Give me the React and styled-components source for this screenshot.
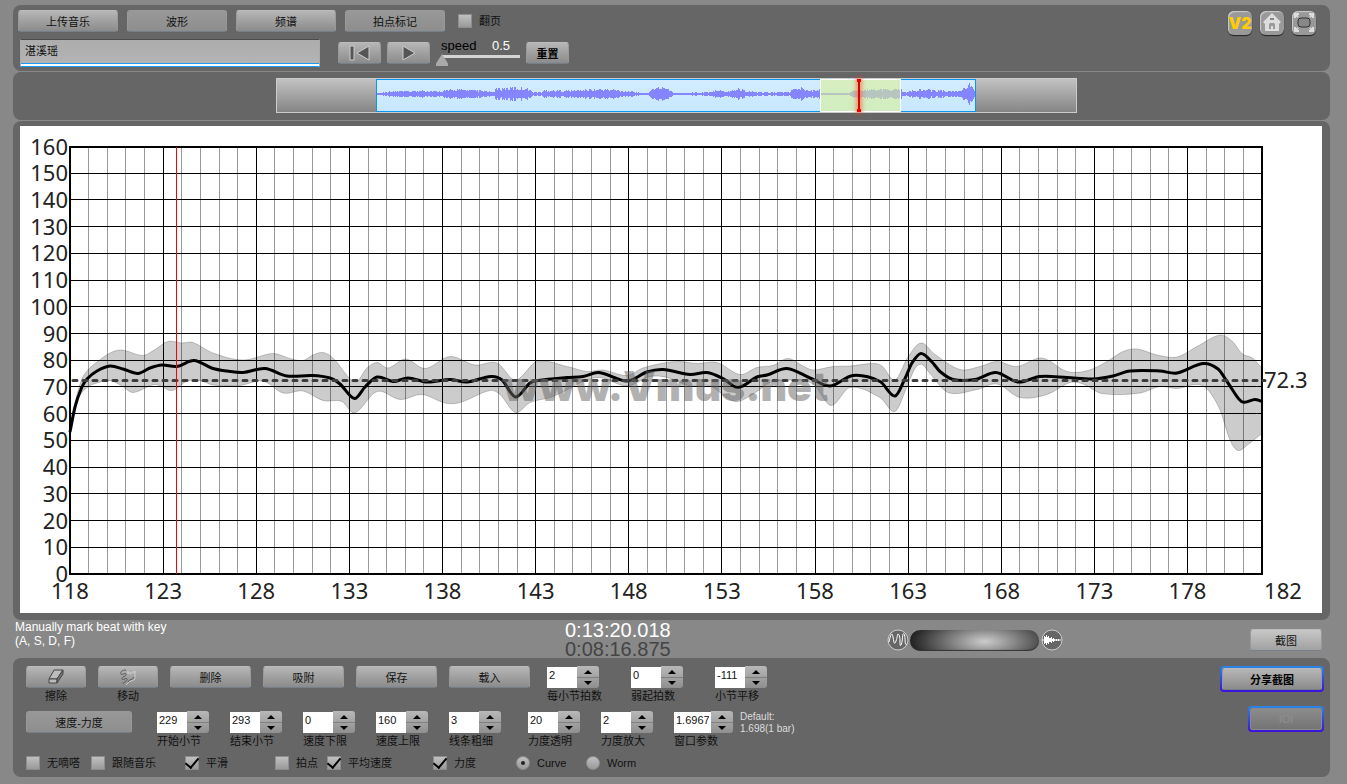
import React, { useState } from "react"
import styled, { createGlobalStyle } from "styled-components"

const GlobalStyle = createGlobalStyle`
    * {
        box-sizing: border-box;
    }

    body {
        margin: 0;

        background: #888;

        font-family: "Liberation Sans", "Noto Sans CJK SC", sans-serif;
        font-size: 11px;
    }

    button, input {
        font-family: inherit;
        font-size: inherit;
    }
`

const StyledPage = styled.main`
    padding: 5px 17px 7px 13px;

    display: flex;
    flex-direction: column;
`

const StyledPanel = styled.section`
    border-radius: 8px;

    background: #666;
`

const StyledHeader = styled(StyledPanel)`
    height: 66px;
    margin-bottom: 1px;
    padding: 5px 14px 0 5px;

    display: flex;
    justify-content: space-between;
`

const StyledToolbar = styled.div`
    display: flex;
    align-items: center;
    gap: 9px;
`

const StyledTransport = styled.div`
    margin: 7px 0 0 2px;

    display: flex;
    align-items: center;
    gap: 6px;
`

const StyledButton = styled.button`
    width: ${props => props.$width || 100}px;
    height: 22px;
    padding: 0;

    display: flex;
    flex-shrink: 0;
    align-items: center;
    justify-content: center;

    border: 1px solid #999;
    border-top-color: #bbb;
    border-bottom-color: #76808a;
    border-radius: 3px;

    background: linear-gradient(180deg, #b6b6b6, #8b8b8b);
    color: #111;

    ${props => props.$bold && `
        color: #000;
        font-weight: 700;
    `}

    ${props => props.$active && `
        border-top-color: #999;

        background: linear-gradient(180deg, #989898, #8e8e8e);
    `}

    ${props => props.$light && `
        background: linear-gradient(180deg, #c8c8c8, #a0a0a0);
    `}

    &:disabled {
        border-color: #8a8a8a;

        background: linear-gradient(180deg, #8c8c8c, #747474);
        color: #8f8f8f;
    }
`

const StyledFrame = styled.div`
    padding: 2px;

    border-radius: 4px;

    background:
        linear-gradient(#777, #777) content-box,
        linear-gradient(180deg, #2b86e8, #3a10d8);
`

const StyledField = styled.input`
    width: 300px;
    height: 28px;
    margin-right: 12px;
    padding: 0 4px 6px;

    border: 1px solid #aaa;
    border-top-color: #4c4c4c;
    border-bottom-color: #1a9bf5;
    outline: 0;
    box-shadow: inset 0 -2px #fff, inset 0 -3px #1a9bf5;

    background: linear-gradient(180deg, #adadad, #b4b4b4);
    color: #111;
`

const StyledSpeed = styled.label`
    width: 84px;
    height: 28px;

    display: flex;
    flex-wrap: wrap;
    justify-content: space-between;

    line-height: 14px;
`

const StyledSpeedName = styled.span`
    padding-left: 5px;

    color: #000;
    font-size: 13px;
`

const StyledSpeedValue = styled.span`
    padding-right: 10px;

    color: #fff;
    font-size: 13px;
`

const StyledSlider = styled.input`
    width: 100%;
    height: 13px;
    margin: 0;

    appearance: none;
    background: linear-gradient(#d4d4d4, #d4d4d4) 6px 1px / 100% 3px no-repeat;

    &::-webkit-slider-thumb {
        width: 12px;
        height: 12px;

        appearance: none;
        background: #aaa;
        clip-path: polygon(50% 0, 100% 80%, 100% 100%, 0 100%, 0 80%);
    }
`

const StyledLabel = styled.label`
    display: flex;
    align-items: center;
    gap: 7px;

    color: #111;
    line-height: 14px;
    white-space: nowrap;
`

const StyledTick = styled.input`
    width: 14px;
    height: 14px;
    margin: 0;

    display: grid;
    place-content: center;

    appearance: none;
    border: 1px solid #8d8d8d;
    background: linear-gradient(180deg, #c0c0c0, #999);

    &[type="radio"] {
        border-radius: 50%;
    }

    &[type="checkbox"]:checked::before {
        width: 6px;
        height: 11px;
        margin-bottom: 3px;

        border: solid #000;
        border-width: 0 2px 2px 0;

        content: "";
        transform: rotate(40deg);
    }

    &[type="radio"]:checked::before {
        width: 4px;
        height: 4px;

        border-radius: 50%;

        background: #222;
        content: "";
    }
`

const StyledShortcuts = styled.nav`
    padding-top: 1px;

    display: flex;
    align-items: flex-start;
    gap: 8px;
`

const StyledShortcut = styled.a`
    width: 24px;
    height: 24px;

    display: flex;
    align-items: center;
    justify-content: center;

    border-radius: 6px;
    box-shadow: inset 1px 1px 1px #ccc, 0 1px 1px #222;

    background: #999;
    color: #fc0;
    font-family: Inter, sans-serif;
    font-size: 16px;
    font-weight: 900;
    text-decoration: none;
`

const StyledOverview = styled(StyledPanel)`
    height: 48px;
    margin-bottom: 1px;
    padding: 6px 0 0 10px;

    display: flex;
    align-items: flex-start;
    justify-content: center;
`

const StyledTrack = styled.div`
    width: 801px;
    height: 35px;
    padding: 0 100px 0 99px;

    border: 1px solid #ccc;

    background: linear-gradient(180deg, #c2c2c2, #858585);
`

const StyledClip = styled.div`
    height: 33px;

    position: relative;

    border: 1px solid #0b95f0;

    background: linear-gradient(180deg, #d4ecff, #c6e8ff);

    svg {
        width: 100%;
        height: 31px;

        display: block;
    }
`

const StyledSelection = styled.div`
    position: absolute;
    top: -1px;
    bottom: -1px;
    left: 74%;
    width: 81px;

    border: 1px solid #fff;

    background: rgba(216,240,150,.6);
`

const StyledPlayhead = styled.div`
    position: absolute;
    top: -1px;
    bottom: -1px;
    left: 37px;
    width: 2px;

    box-shadow: 0 0 4px 2px rgba(255,60,30,.5);

    background: #d00;

    &::before, &::after {
        width: 4px;
        height: 3px;

        position: absolute;
        left: -1px;

        background: #e00;
        content: "";
    }

    &::after {
        bottom: 0;
    }
`

const StyledChart = styled(StyledPanel)`
    padding: 5px 8px 7px 7px;
`

const StyledPlot = styled.svg`
    width: 100%;
    height: auto;

    display: block;

    background: #fff;

    text {
        fill: #222;
        font-family: "Noto Sans", sans-serif;
        font-size: 22px;
    }

    .watermark {
        fill: rgba(100,100,100,.5);
        font-family: Inter, sans-serif;
        font-size: 41px;
        font-weight: 900;
    }
`

const StyledStatus = styled.div`
    height: 38px;
    padding: 0 8px 0 2px;

    display: grid;
    grid-template-columns: 550fr 322fr 363fr 72px;
    align-items: center;
`

const StyledHint = styled.p`
    margin: 0;
    padding-bottom: 12px;

    color: #fff;
    font-size: 12px;
    line-height: 14px;
`

const StyledClock = styled.div`
    color: #fff;
    font-size: 20px;
    line-height: 19px;
`

const StyledTotal = styled.div`
    color: #444;
`

const StyledZoom = styled.label`
    display: flex;
    align-items: center;
    gap: 1px;
`

const StyledWheel = styled.input`
    width: 129px;
    height: 21px;
    margin: 0;

    appearance: none;
    border-radius: 11px;
    box-shadow: inset 0 -1px 1px #333;

    background: radial-gradient(ellipse 78px 30px at 58% 55%, #ccc, #a0a0a0 25%, #222 95%);

    &::-webkit-slider-thumb {
        width: 1px;
        height: 1px;

        appearance: none;
    }
`

const StyledControls = styled(StyledPanel)`
    padding: 8px 6px 7px 13px;

    display: flex;
    justify-content: space-between;
`

const StyledRows = styled.div`
    display: flex;
    flex-direction: column;
    gap: 8px;
`

const StyledRow = styled.div`
    height: 37px;

    display: flex;
    align-items: flex-start;
    gap: 12px;
`

const StyledGroup = styled.div`
    margin-left: ${props => props.$indent}px;

    display: flex;
    gap: ${props => props.$gap}px;
`

const StyledOptions = styled.div`
    display: grid;
    grid-template-columns: 65px 94px 90px 52px 106px 83px 70px auto;
`

const StyledTool = styled.div`
    display: flex;
    flex-direction: column;
    align-items: center;

    color: #111;
    line-height: 16px;
`

const StyledSpinner = styled.div`
    width: ${props => props.$width + 22}px;

    display: grid;
    grid-template-columns: 1fr 22px;
    grid-template-rows: 22px 16px;

    input {
        width: 100%;
        margin: 1px 0 0;
        padding: 0 2px 6px;

        border: 0;

        background: #fff;
        color: #111;
    }

    label {
        grid-column: 1 / 3;

        color: #111;
        line-height: 16px;
        white-space: nowrap;
    }
`

const StyledSteps = styled.div`
    display: flex;
    flex-direction: column;

    border-radius: 0 3px 3px 0;

    background: linear-gradient(180deg, #b8b8b8, #8f8f8f);
`

const StyledStep = styled.button`
    height: 11px;
    padding: 0;

    display: flex;
    align-items: center;
    justify-content: center;

    border: 0;

    background: none;

    & + & {
        border-top: 1px solid #808080;
    }
`

const StyledDefault = styled.p`
    margin: 0 0 0 -5px;

    color: #ddd;
    font-size: 10px;
    line-height: 12px;
`

const StyledShare = styled.div`
    display: flex;
    flex-direction: column;
    align-items: flex-end;
    gap: 14px;
`

const LEVELS = [
    [0, 1], [14, 3], [36, 3], [46, 4], [60, 3], [78, 5], [100, 4], [116, 2], [118, 6], [136, 7],
    [152, 6], [155, 2], [165, 2], [167, 4], [195, 4], [214, 5], [236, 5], [250, 3], [270, 1],
    [275, 6], [288, 8], [294, 4], [296, 1], [334, 2], [338, 5], [350, 3], [362, 6], [370, 3],
    [385, 2], [412, 2], [415, 5], [426, 7], [434, 4], [442, 5], [444, 1], [470, 1], [476, 4],
    [490, 5], [524, 5], [526, 2], [545, 5], [560, 4], [580, 3], [588, 7], [592, 12], [596, 5], [598, 2],
]

const TEMPO = [
    [70, 432], [75, 407], [81.5, 388], [87, 379], [97, 371], [110, 366], [123, 369], [138, 373.5],
    [150, 368], [162, 365], [177, 366.5], [194, 360.5], [213, 368.5], [227, 371], [243, 372.5],
    [265, 368.5], [287, 376], [312, 375.5], [330, 378], [340, 384], [354.5, 398.5], [365, 387],
    [377, 377], [393, 381.5], [408, 378], [427, 382], [450, 379.5], [467, 382], [491, 376.5],
    [502, 380], [515.5, 397], [530, 383], [538, 380.5], [567, 377.5], [583, 376.5], [599, 372.5],
    [627, 381], [647, 372], [663, 369.5], [690, 374.5], [707, 372.5], [723, 378.5], [738, 387.5],
    [757, 377], [767, 375], [787, 368.5], [810, 378], [830, 386], [853, 375.5], [880, 381.5],
    [895, 396], [905, 378.5], [912, 363], [921, 353.5], [932, 362], [940, 371.5], [953, 379.5],
    [975, 379.5], [996, 372.5], [1018, 382], [1040, 376.5], [1067, 377.5], [1093, 379],
    [1113, 376], [1130, 371], [1160, 371], [1177, 373], [1203, 363.5], [1218, 369], [1228, 383],
    [1241.5, 401.5], [1255, 399.5], [1262, 401.5],
]

const UPPER = [
    [70, 430], [75, 403], [81.5, 380], [88, 370], [97, 362], [110, 353], [122, 350], [143, 355.5],
    [155, 349.5], [168, 341.5], [182, 343], [193, 342.5], [213, 353], [243, 360], [273, 353.5],
    [290, 358.5], [303, 360.5], [313, 355], [323, 352.5], [333, 358], [355, 382], [367, 368],
    [377, 362.5], [388, 368], [405.5, 359], [425, 368.5], [450, 356.5], [475, 365], [497, 363],
    [515.5, 380], [537, 361.5], [567, 366.5], [587, 371.5], [603, 370], [627, 375.5], [643, 368],
    [667, 362.5], [680, 361.5], [697, 363.5], [717, 362.5], [740, 374.5], [757, 367.5],
    [773, 365.5], [788, 358.5], [803, 366], [813, 370], [833, 366.5], [850, 366], [873, 363.5],
    [882, 366], [895, 380], [908, 357], [921, 343], [935, 354.5], [960, 369.5], [980, 366.5],
    [997, 361.5], [1017, 366.5], [1042, 358], [1067, 371.5], [1088, 370.5], [1107, 361.5],
    [1123, 351.5], [1137, 349], [1157, 355], [1177, 357], [1197, 346.5], [1220, 335],
    [1232, 341], [1242, 353.5], [1253, 358.5], [1262, 368.5],
]

const LOWER = [
    [70, 433], [78, 400], [87, 387.5], [97, 383], [110, 380.5], [122, 386], [133, 392.5],
    [155, 384.5], [172, 390.5], [187, 381], [200, 380.5], [213, 385], [240, 385.5], [263, 381],
    [283, 393], [303, 391], [323, 400.5], [342, 401.5], [354.5, 413], [377, 391.5], [400, 399.5],
    [422, 394.5], [445, 403], [460, 402.5], [490, 390.5], [500, 394.5], [515.5, 412.5],
    [530, 402.5], [550, 397.5], [567, 390], [583, 381.5], [600, 377.5], [627, 386], [650, 376.5],
    [667, 377.5], [690, 386], [710, 386], [735, 401.5], [757, 391.5], [770, 382.5], [790, 380],
    [813, 384], [831, 405.5], [850, 387.5], [880, 397.5], [895, 411.5], [907, 386.5],
    [915, 368.5], [922, 364.5], [930, 373.5], [948, 392.5], [977, 389.5], [997, 384],
    [1020, 397.5], [1047, 394.5], [1070, 382.5], [1083, 384], [1102, 393.5], [1140, 393],
    [1160, 386.5], [1177, 388.5], [1197, 384.5], [1208, 390], [1220, 410], [1230, 440],
    [1238, 450.5], [1248, 444.5], [1262, 433.5],
]

const PLOT = { left: 70, right: 1262, top: 146.5, bottom: 574 }

const barX = bar => PLOT.left + (bar - 118) * (PLOT.right - PLOT.left) / 64
const tempoY = tempo => PLOT.bottom - tempo * (PLOT.bottom - PLOT.top) / 160

const range = (from, to, step) => {
    const values = []
    for(let value = from; value <= to; value += step) values.push(value)
    return values
}

// every segment leaves and enters its points at the slope between their neighbours
const smooth = points => points.slice(1).map((point, index) => {
    const slope = i => {
        const before = points[Math.max(i - 1, 0)]
        const after = points[Math.min(i + 1, points.length - 1)]
        return (after[1] - before[1]) / (after[0] - before[0])
    }
    const [x0, y0] = points[index]
    const third = (point[0] - x0) / 3

    return `C${x0 + third} ${y0 + slope(index) * third} ` +
        `${point[0] - third} ${point[1] - slope(index + 1) * third} ${point[0]} ${point[1]}`
}).join("")

const wavePath = () => {
    let path = ""
    for(let x = 0; x < 598; x++){
        const next = LEVELS.findIndex(level => level[0] > x)
        const [x0, a0] = LEVELS[next - 1]
        const [x1, a1] = LEVELS[next]
        const level = a0 + (a1 - a0) * (x - x0) / (x1 - x0)
        const noise = Math.abs(Math.sin(x * 12.9898) * 43758.5453) % 1
        const height = Math.max(1, Math.round(level * (.55 + noise * .5)))
        path += `M${x + .5} ${14 - height}V${14 + height}`
    }
    return path
}

const Check = ({ label, checked }) => (
    <StyledLabel>
        <StyledTick type="checkbox" defaultChecked={checked} />
        {label}
    </StyledLabel>
)

const Spinner = ({ id, label, value, step = 1, width = 30 }) => {
    const [current, setCurrent] = useState(value)
    const move = amount => setCurrent(String(Number(current) + amount))

    return (
        <StyledSpinner $width={width}>
            <input id={id} value={current} onChange={event => setCurrent(event.target.value)} />
            <StyledSteps>
                <StyledStep aria-label={`${label} +`} onClick={() => move(step)}>
                    <svg width="8" height="4"><path d="M0 4L4 0L8 4Z" /></svg>
                </StyledStep>
                <StyledStep aria-label={`${label} -`} onClick={() => move(-step)}>
                    <svg width="8" height="4"><path d="M0 0L4 4L8 0Z" /></svg>
                </StyledStep>
            </StyledSteps>
            <label htmlFor={id}>{label}</label>
        </StyledSpinner>
    )
}

const Overview = () => (
    <StyledOverview>
        <StyledTrack>
            <StyledClip>
                <svg viewBox="0 0 598 31" preserveAspectRatio="none">
                    <path d={wavePath()} stroke="#8585ff" />
                </svg>
                <StyledSelection>
                    <StyledPlayhead />
                </StyledSelection>
            </StyledClip>
        </StyledTrack>
    </StyledOverview>
)

const Chart = () => (
    <StyledChart>
        <StyledPlot viewBox="20 126 1302 487">
            <g stroke="#999" shapeRendering="crispEdges">
                {range(119, 181, 1).filter(bar => bar % 5 !== 3).map(bar => (
                    <line key={bar} x1={barX(bar)} x2={barX(bar)} y1={PLOT.top} y2={PLOT.bottom} />
                ))}
            </g>
            <g stroke="#000" shapeRendering="crispEdges">
                {range(123, 178, 5).map(bar => (
                    <line key={bar} x1={barX(bar)} x2={barX(bar)} y1={PLOT.top} y2={PLOT.bottom} />
                ))}
                {range(10, 150, 10).map(tempo => (
                    <line key={tempo} x1={PLOT.left} x2={PLOT.right} y1={tempoY(tempo)} y2={tempoY(tempo)} />
                ))}
            </g>
            <path
                d={`M70 430${smooth(UPPER)}L1262 433.5${smooth([...LOWER].reverse())}Z`}
                fill="rgba(0,0,0,.2)"
                stroke="rgba(0,0,0,.2)"
            />
            <rect x="70" y="147" width="1192" height="427" fill="none" stroke="#000" strokeWidth="2" />
            <path d={`M70 432${smooth(TEMPO)}`} fill="none" stroke="#000" strokeWidth="3" />
            <line
                x1="73"
                x2="1265"
                y1="380.5"
                y2="380.5"
                stroke="#3c3c3c"
                strokeWidth="3"
                strokeDasharray="4 6"
                strokeLinecap="round"
            />
            <line x1="176.5" x2="176.5" y1="147" y2="574" stroke="#f00" />
            {range(0, 160, 10).map(tempo => (
                <text key={tempo} x="68" y={tempoY(tempo) + 8} textAnchor="end">{tempo}</text>
            ))}
            {range(118, 178, 5).map(bar => (
                <text key={bar} x={barX(bar)} y="599" textAnchor="middle">{bar}</text>
            ))}
            <text x="1283" y="599" textAnchor="middle">182</text>
            <text x="1264" y="388">72.3</text>
            <text className="watermark" x="503" y="401">www.Vmus.net</text>
        </StyledPlot>
    </StyledChart>
)

const App = () => (
    <>
        <GlobalStyle />
        <StyledPage>
            <StyledHeader as="header">
                <div>
                    <StyledToolbar>
                        <StyledButton>上传音乐</StyledButton>
                        <StyledButton $active>波形</StyledButton>
                        <StyledButton>频谱</StyledButton>
                        <StyledButton $active>拍点标记</StyledButton>
                        <StyledGroup $indent={4}>
                            <Check label="翻页" />
                        </StyledGroup>
                    </StyledToolbar>
                    <StyledTransport>
                        <StyledField aria-label="曲目" defaultValue="湛溪瑶" />
                        <StyledButton $width={43} aria-label="回到开头">
                            <svg width="22" height="16" stroke="#ccc" fill="#555">
                                <path d="M1 1H5V15H1Z" />
                                <path d="M20 1V15L8 8Z" />
                            </svg>
                        </StyledButton>
                        <StyledButton $width={43} aria-label="播放">
                            <svg width="16" height="16" stroke="#ccc" fill="#555">
                                <path d="M2 1V15L14 8Z" />
                            </svg>
                        </StyledButton>
                        <StyledSpeed>
                            <StyledSpeedName>speed</StyledSpeedName>
                            <StyledSpeedValue>0.5</StyledSpeedValue>
                            <StyledSlider type="range" min="0.5" max="2" step="0.1" defaultValue="0.5" />
                        </StyledSpeed>
                        <StyledButton $width={43} $bold>重置</StyledButton>
                    </StyledTransport>
                </div>
                <StyledShortcuts>
                    <StyledShortcut href="#v2">V2</StyledShortcut>
                    <StyledShortcut href="#home" aria-label="主页">
                        <svg width="22" height="22" fill="#ddd">
                            <path fillRule="evenodd" d="M11 1L20 10L18 12V19H4V12L2 10ZM8 17H10V14H12V17H14V12L13 11H9L8 12Z" />
                            <path d="M9 6H13V8H9Z" fill="#888" />
                        </svg>
                    </StyledShortcut>
                    <StyledShortcut href="#full" aria-label="全屏">
                        <svg width="24" height="24" fill="none" stroke="#ddd" strokeWidth="2">
                            <path d="M3 7V3H7M17 3H21V7M21 16V20H17M7 20H3V16M3 3L6 6M21 3L18 6M21 20L18 17M3 20L6 17" />
                            <rect x="6" y="7" width="12" height="9" rx="3" fill="#888" stroke="#333" strokeWidth="1" />
                        </svg>
                    </StyledShortcut>
                </StyledShortcuts>
            </StyledHeader>
            <Overview />
            <Chart />
            <StyledStatus>
                <StyledHint>
                    Manually mark beat with key
                    <br />
                    (A, S, D, F)
                </StyledHint>
                <StyledClock>
                    0:13:20.018
                    <StyledTotal>0:08:16.875</StyledTotal>
                </StyledClock>
                <StyledZoom>
                    <svg width="22" height="22" fill="#666" stroke="#fff">
                        <circle cx="11" cy="11" r="10" stroke="#ccc" />
                        <path d="M2 13C4 4 5 3 6 8S7 17 9 12S10 3 12 6S12 19 14 16S15 3 17 5S17 18 20 15" fill="none" />
                    </svg>
                    <StyledWheel type="range" aria-label="缩放" />
                    <svg width="23" height="22" fill="#666" stroke="#fff">
                        <circle cx="12" cy="11" r="10" stroke="#ccc" />
                        <path d="M2 11H21M4.5 7V15M5.5 8V14M6.5 6V16M7.5 8V14M8.5 7V15M9.5 9V13M10.5 9V13M11.5 8V14M12.5 10V12M13.5 9V13M14.5 10V12M16.5 10V12M18.5 10V12" />
                    </svg>
                </StyledZoom>
                <StyledButton $width={72} $light>截图</StyledButton>
            </StyledStatus>
            <StyledControls>
                <StyledRows>
                    <StyledRow>
                        <StyledTool>
                            <StyledButton $width={60} aria-label="擦除">
                                <svg width="18" height="16" fill="#bbb" stroke="#444" strokeLinejoin="round">
                                    <path d="M7 1H16L10 10H2Z" />
                                    <path d="M2 10H10V14H2Z" />
                                    <path d="M10 14L16 5V1L10 10Z" fill="#777" />
                                </svg>
                            </StyledButton>
                            擦除
                        </StyledTool>
                        <StyledTool>
                            <StyledButton $width={60} aria-label="移动">
                                <svg width="18" height="18" fill="none" stroke="#555">
                                    <path d="M7 2C3 2 1 4 2 6C3 8 6 4 7 6C8 8 2 9 3 11C4 13 7 9 8 11S4 14 4 16" />
                                    <path d="M9 3C8 7 10 7 10 4M11 4C11 7 13 7 13 4M14 3C14 6 16 6 16 3M16 3V9C16 12 14 13 11 13L7 17" stroke="#ccc" />
                                    <path d="M15 9C14 12 10 11 9 14" />
                                </svg>
                            </StyledButton>
                            移动
                        </StyledTool>
                        <StyledButton $width={81}>删除</StyledButton>
                        <StyledButton $width={81}>吸附</StyledButton>
                        <StyledButton $width={81}>保存</StyledButton>
                        <StyledButton $width={81}>载入</StyledButton>
                        <StyledGroup $indent={5} $gap={32}>
                            <Spinner id="beats" label="每小节拍数" value="2" />
                            <Spinner id="pickup" label="弱起拍数" value="0" />
                            <Spinner id="shift" label="小节平移" value="-111" />
                        </StyledGroup>
                    </StyledRow>
                    <StyledRow>
                        <StyledButton $width={106} $active>速度-力度</StyledButton>
                        <StyledGroup $indent={13} $gap={21}>
                            <Spinner id="start" label="开始小节" value="229" />
                            <Spinner id="end" label="结束小节" value="293" />
                            <Spinner id="low" label="速度下限" value="0" />
                            <Spinner id="high" label="速度上限" value="160" />
                            <Spinner id="stroke" label="线条粗细" value="3" />
                        </StyledGroup>
                        <StyledGroup $indent={15} $gap={21}>
                            <Spinner id="alpha" label="力度透明" value="20" />
                            <Spinner id="scale" label="力度放大" value="2" />
                            <Spinner id="window" label="窗口参数" value="1.6967" step={.1} width={37} />
                        </StyledGroup>
                        <StyledDefault>
                            Default:
                            <br />
                            1.698(1 bar)
                        </StyledDefault>
                    </StyledRow>
                    <StyledOptions>
                        <Check label="无嘀嗒" />
                        <Check label="跟随音乐" />
                        <Check label="平滑" checked />
                        <Check label="拍点" />
                        <Check label="平均速度" checked />
                        <Check label="力度" checked />
                        <StyledLabel>
                            <StyledTick type="radio" name="shape" defaultChecked />
                            Curve
                        </StyledLabel>
                        <StyledLabel>
                            <StyledTick type="radio" name="shape" />
                            Worm
                        </StyledLabel>
                    </StyledOptions>
                </StyledRows>
                <StyledShare>
                    <StyledFrame>
                        <StyledButton $bold>分享截图</StyledButton>
                    </StyledFrame>
                    <StyledFrame>
                        <StyledButton $width={72} disabled>IOI</StyledButton>
                    </StyledFrame>
                </StyledShare>
            </StyledControls>
        </StyledPage>
    </>
)

export default App
